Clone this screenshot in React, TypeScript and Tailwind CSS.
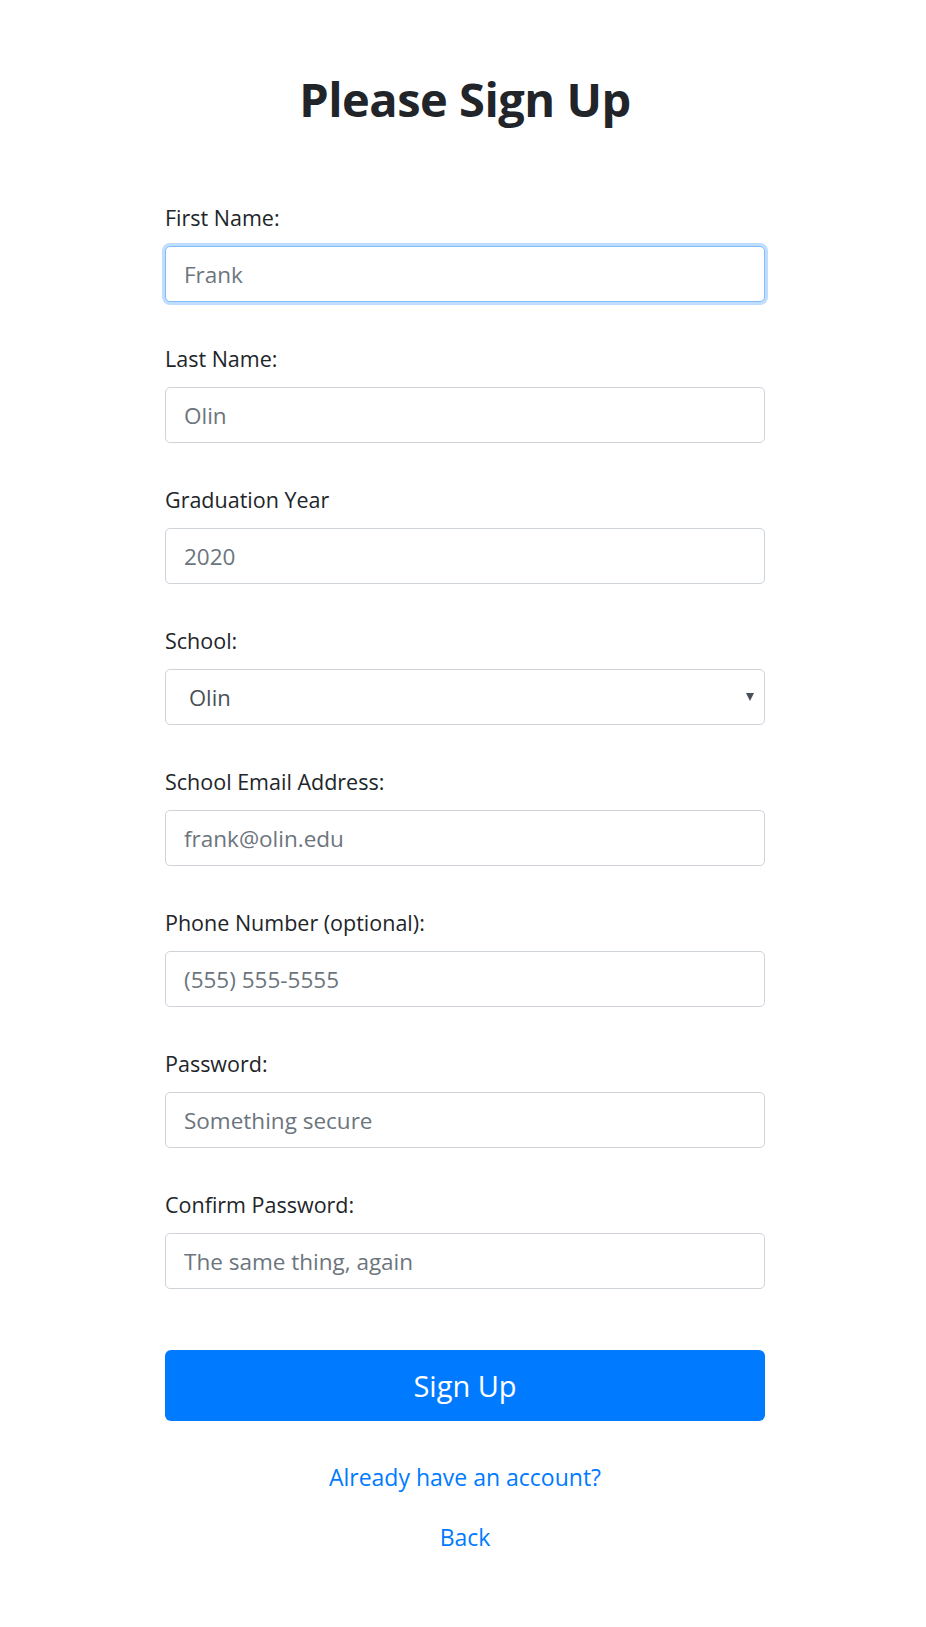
import { useState } from "react";

// Field definitions for the sign up form
const fields = [
  { name: "firstName", label: "First Name:", placeholder: "Frank", type: "text" },
  { name: "lastName", label: "Last Name:", placeholder: "Olin", type: "text" },
  { name: "gradYear", label: "Graduation Year", placeholder: "2020", type: "text" },
  { name: "school", label: "School:", placeholder: "", type: "select" },
  { name: "email", label: "School Email Address:", placeholder: "frank@olin.edu", type: "email" },
  { name: "phone", label: "Phone Number (optional):", placeholder: "(555) 555-5555", type: "tel" },
  { name: "password", label: "Password:", placeholder: "Something secure", type: "password" },
  { name: "confirm", label: "Confirm Password:", placeholder: "The same thing, again", type: "password" },
];

export default function App() {
  const [formData, setFormData] = useState<Record<string, string>>({ school: "Olin" });

  const handleChange = (e: React.ChangeEvent<HTMLInputElement | HTMLSelectElement>) => {
    setFormData(prev => ({ ...prev, [e.target.name]: e.target.value }));
  };

  return (
    <div className="min-h-screen bg-white flex justify-center pl-[4px] font-['Open_Sans',sans-serif] text-[#212529]">
      <div className="w-[600px] pt-[70px] pb-[60px]">
        <h1 className="text-center text-[47px] font-bold leading-[58px] tracking-[-0.5px]">Please Sign Up</h1>

        <form className="mt-[75px] flex flex-col gap-[42px]" onSubmit={e => e.preventDefault()}>
          {fields.map((f, i) => (
            <div key={f.name}>
              <label htmlFor={f.name} className="block text-[21.5px] leading-[30px] mb-[13px]">
                {f.label}
              </label>
              {f.type === "select" ? (
                <div className="relative">
                  <select
                    id={f.name}
                    name={f.name}
                    value={formData.school}
                    onChange={handleChange}
                    className="w-full h-[56px] appearance-none bg-white border border-[#ced4da] rounded-[5px] pl-[23px] pr-[40px] text-[22px] text-[#495057] outline-none"
                  >
                    <option>Olin</option>
                    <option>Wellesley</option>
                    <option>Babson</option>
                  </select>
                  <svg className="absolute right-[11px] top-[23px] pointer-events-none" width="8" height="9" viewBox="0 0 8 9">
                    <path d="M0 1h8L4 9z" fill="#495057" />
                  </svg>
                </div>
              ) : (
                <input
                  id={f.name}
                  name={f.name}
                  type={f.type}
                  placeholder={f.placeholder}
                  value={formData[f.name] || ""}
                  onChange={handleChange}
                  className={
                    i === 0
                      ? "w-full h-[56px] bg-white border border-[#80bdff] shadow-[0_0_0_3px_rgba(0,123,255,0.25)] rounded-[5px] px-[18px] text-[22.5px] text-[#495057] placeholder:text-[#6c757d] outline-none"
                      : "w-full h-[56px] bg-white border border-[#ced4da] rounded-[5px] px-[18px] text-[22.5px] text-[#495057] placeholder:text-[#6c757d] outline-none"
                  }
                />
              )}
            </div>
          ))}
        </form>

        {/* Submit Button */}
        <button
          type="submit"
          className="mt-[61px] w-full h-[71px] bg-[#007bff] text-white text-[29px] rounded-[6px] hover:bg-[#0069d9]"
        >
          Sign Up
        </button>

        <div className="mt-[41px] flex flex-col items-center gap-[30px] text-[23px] leading-[30px] text-[#007bff]">
          <a href="#">Already have an account?</a>
          <a href="#">Back</a>
        </div>
      </div>
    </div>
  );
}
